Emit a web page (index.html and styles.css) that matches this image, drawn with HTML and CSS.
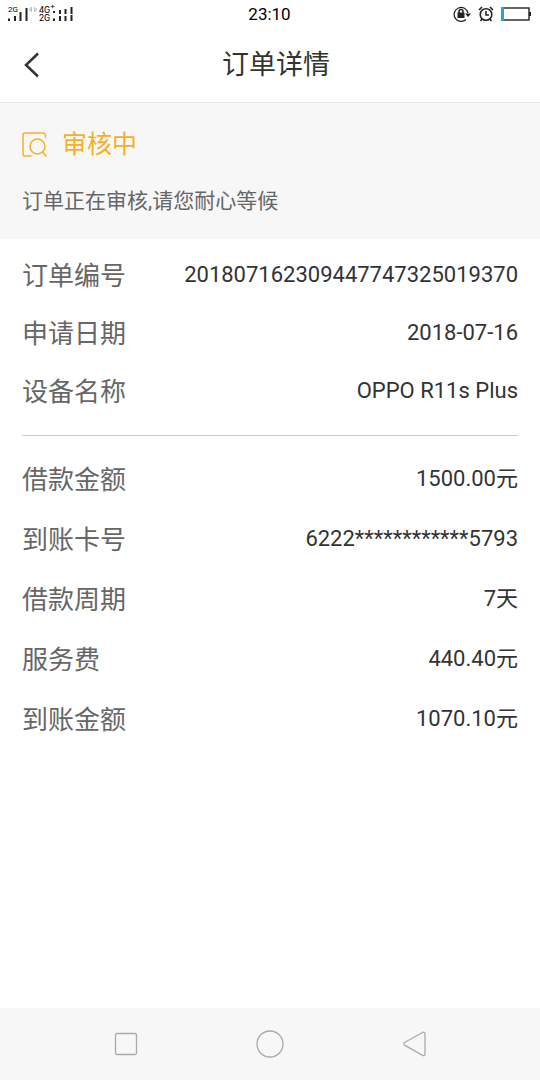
FILE: index.html
```html
<!DOCTYPE html>
<html lang="zh-CN">
<head>
    <meta charset="UTF-8">
    <meta name="viewport" content="width=device-width, initial-scale=1.0">
    <title>订单详情</title>
    <link rel="stylesheet" href="styles.css">
</head>
<body>

    <div class="status-bar">
        <div class="signals">
            <span class="network">2G</span>
            <svg width="20" height="16" viewBox="0 0 20 16">
                <path d="M1 12.500v2.500M7 10v5M12.500 6v9M18.500 2v13" stroke="#222" stroke-width="2" />
            </svg>
            <svg class="data-arrows" width="8" height="8" viewBox="0 0 8 8">
                <path d="M2.500 6V1L0 4h3M5.500 1v5L8 3H5" fill="none" stroke="#bbb" />
            </svg>
            <span class="network-stack">
                <span>4G<sup>+</sup></span>
                <span>2G</span>
            </span>
            <svg width="20" height="16" viewBox="0 0 20 16">
                <path d="M1 5v2M1 12.500v2.500M7 4v4M7 10v5M12.500 3v5M12.500 10v5M18.500 1v7M18.500 9v6" stroke="#222" stroke-width="2" />
            </svg>
        </div>
        <span class="clock">23:10</span>
        <div class="indicators">
            <svg width="18" height="18" viewBox="0 0 18 18">
                <path d="M13 14.500A7 7 0 1 1 15 8" fill="none" stroke="#222" stroke-width="1.300" />
                <path d="M12 8.500h6l-3 3.500z" fill="#222" />
                <rect x="4.500" y="7.500" width="7" height="5.500" fill="#222" />
                <path d="M6 8V6.500a2 2 0 0 1 4 0V8" fill="none" stroke="#222" stroke-width="1.500" />
            </svg>
            <svg width="16" height="18" viewBox="0 0 16 18">
                <circle cx="8" cy="9.500" r="5.800" fill="none" stroke="#222" stroke-width="1.600" />
                <path d="M8 6v4h3M1 5l3-3M15 5l-3-3M4 14l-1.500 2M12 14l1.500 2" fill="none" stroke="#222" stroke-width="1.600" />
            </svg>
            <svg width="30" height="14" viewBox="0 0 30 14">
                <rect x="1" y="1" width="27" height="12" fill="none" stroke="#222" stroke-width="1.400" />
                <rect x="0" y="0" width="3" height="14" fill="#2c9de8" />
                <rect x="28" y="5" width="2" height="4" fill="#222" />
            </svg>
        </div>
    </div>

    <header class="header">
        <button class="back" type="button" aria-label="返回">
            <svg width="16" height="26" viewBox="0 0 16 26">
                <path d="M14 1.500L2 13L14 24.500" fill="none" stroke="#333" stroke-width="2.500" />
            </svg>
        </button>
        <h1>订单详情</h1>
    </header>

    <main>
        <section class="review">
            <h2>
                <svg width="26" height="26" viewBox="0 0 26 26" fill="none" stroke="#f9ae26" stroke-width="1.500" stroke-linecap="round">
                    <path d="M23.500 5.500V3.500a2.500 2.500 0 0 0-2.500-2.500H3a2 2 0 0 0-2 2v19a2 2 0 0 0 2 2h6" />
                    <circle cx="15.500" cy="14.500" r="7.500" />
                    <path d="M20.500 20L24 24" />
                </svg>
                审核中
            </h2>
            <p>订单正在审核,请您耐心等候</p>
        </section>

        <dl class="details order">
            <div><dt>订单编号</dt><dd>201807162309447747325019370</dd></div>
            <div><dt>申请日期</dt><dd>2018-07-16</dd></div>
            <div><dt>设备名称</dt><dd>OPPO R11s Plus</dd></div>
        </dl>

        <dl class="details loan">
            <div><dt>借款金额</dt><dd>1500.00元</dd></div>
            <div><dt>到账卡号</dt><dd>6222************5793</dd></div>
            <div><dt>借款周期</dt><dd>7天</dd></div>
            <div><dt>服务费</dt><dd>440.40元</dd></div>
            <div><dt>到账金额</dt><dd>1070.10元</dd></div>
        </dl>
    </main>

    <nav class="nav-bar">
        <button type="button" aria-label="最近任务">
            <svg width="28" height="28" viewBox="0 0 28 28">
                <rect x="3.500" y="3.500" width="21" height="21" rx="1.500" />
            </svg>
        </button>
        <button type="button" aria-label="主页">
            <svg width="28" height="28" viewBox="0 0 28 28">
                <circle cx="14" cy="14" r="13" />
            </svg>
        </button>
        <button type="button" aria-label="返回上一页">
            <svg width="28" height="28" viewBox="0 0 28 28">
                <path d="M23 2.200L4.500 12.500a1.500 1.500 0 0 0 0 2.600L23 25.600a1.500 1.500 0 0 0 2-1.500V3.700a1.500 1.500 0 0 0-2-1.500z" />
            </svg>
        </button>
    </nav>

</body>
</html>
```
FILE: styles.css
```css
* {
    box-sizing: border-box;
}

body {
    font-family: Roboto, "Noto Sans CJK SC", sans-serif;
    margin: 0;
    min-height: 100vh;
    display: flex;
    flex-direction: column;
    background-color: #fff;
    color: #333;
}

h1, h2, p, dl, dd {
    margin: 0;
    font-weight: normal;
}

button {
    padding: 0;
    border: none;
    background: none;
    cursor: pointer;
}

svg {
    display: block;
}

/* Phone status bar */
.status-bar {
    display: grid;
    grid-template-columns: 1fr auto 1fr;
    align-items: center;
    height: 28px;
    padding: 0 9px 0 8px;
    color: #000;
}

.signals {
    display: flex;
    align-items: flex-start;
    height: 16px;
    font-size: 9px;
    line-height: 8px;
}

/* Sits over the short bars of the first signal */
.network {
    width: 0;
    font-size: 8px;
    white-space: nowrap;
}

.data-arrows {
    margin: 0 2px 0 1px;
}

.network-stack {
    display: flex;
    flex-direction: column;
    width: 14px;
    white-space: nowrap;
}

.network-stack sup {
    font-size: 8px;
    line-height: 1px;
}

.clock {
    font-size: 17px;
    line-height: 28px;
}

.indicators {
    display: flex;
    align-items: center;
    justify-content: flex-end;
    gap: 7px;
}

/* Page header */
.header {
    display: grid;
    grid-template-columns: auto 1fr;
    align-items: center;
    height: 75px;
    padding: 0 28px 0 24px;
    border-bottom: 1px solid #e8e8e8;
}

h1 {
    font-size: 27px;
    line-height: 40px;
    text-align: center;
}

/* Review status */
.review {
    padding: 24px 22px;
    background-color: #f7f7f7;
}

.review h2 {
    display: flex;
    align-items: center;
    gap: 14px;
    font-size: 25px;
    line-height: 36px;
    color: #f9ae26;
}

.review p {
    margin-top: 24px;
    font-size: 21px;
    line-height: 28px;
    color: #666;
}

/* Order and loan details */
.details {
    margin: 0 22px;
}

.details div {
    display: flex;
    align-items: center;
    justify-content: space-between;
    height: 60px;
}

.details dt {
    font-size: 26px;
    line-height: 36px;
    color: #666;
}

.details dd {
    padding-bottom: 2px;
    font-size: 22px;
    line-height: 30px;
}

.order {
    padding: 8px 0 14px;
    border-bottom: 1px solid #ccc;
}

.order div {
    height: 58px;
}

.loan {
    padding: 14px 0;
}

/* Phone navigation bar */
.nav-bar {
    display: flex;
    align-items: center;
    justify-content: space-evenly;
    height: 72px;
    margin-top: auto;
    background-color: #f7f7f7;
}

.nav-bar button {
    display: flex;
    justify-content: center;
    width: 36px;
}

.nav-bar svg {
    fill: none;
    stroke: #aaa;
    stroke-width: 1.3;
}
```
